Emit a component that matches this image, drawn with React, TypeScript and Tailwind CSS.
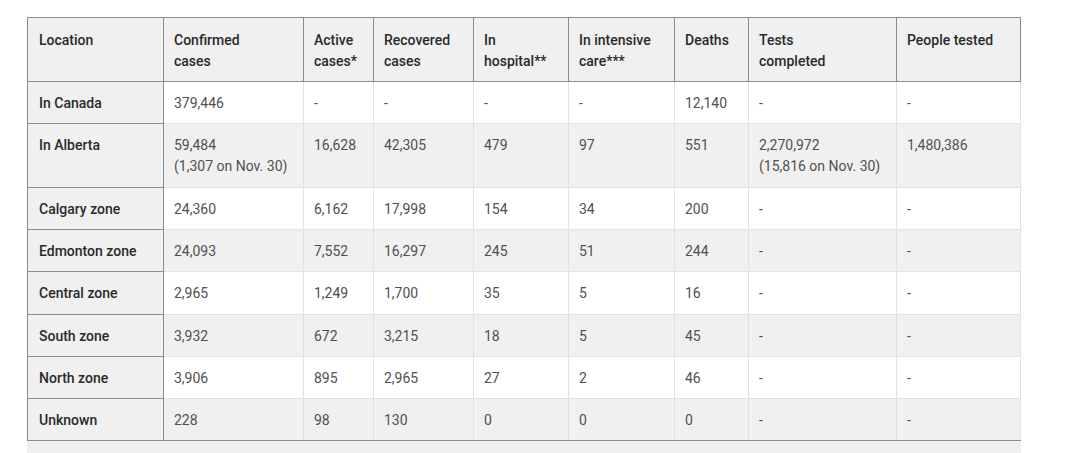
type Row = { loc: string; cells: (string | [string, string])[]; tall?: boolean };

const HEADERS = [
  ['Location'],
  ['Confirmed', 'cases'],
  ['Active', 'cases*'],
  ['Recovered', 'cases'],
  ['In', 'hospital**'],
  ['In intensive', 'care***'],
  ['Deaths'],
  ['Tests', 'completed'],
  ['People tested'],
];

const WIDTHS = [136, 140, 70, 100, 95, 106, 74, 148, 124];

const ROWS: Row[] = [
  { loc: 'In Canada', cells: ['379,446', '-', '-', '-', '-', '12,140', '-', '-'] },
  {
    loc: 'In Alberta',
    cells: [['59,484', '(1,307 on Nov. 30)'], '16,628', '42,305', '479', '97', '551', ['2,270,972', '(15,816 on Nov. 30)'], '1,480,386'],
    tall: true,
  },
  { loc: 'Calgary zone', cells: ['24,360', '6,162', '17,998', '154', '34', '200', '-', '-'] },
  { loc: 'Edmonton zone', cells: ['24,093', '7,552', '16,297', '245', '51', '244', '-', '-'] },
  { loc: 'Central zone', cells: ['2,965', '1,249', '1,700', '35', '5', '16', '-', '-'], tall: true },
  { loc: 'South zone', cells: ['3,932', '672', '3,215', '18', '5', '45', '-', '-'] },
  { loc: 'North zone', cells: ['3,906', '895', '2,965', '27', '2', '46', '-', '-'] },
  { loc: 'Unknown', cells: ['228', '98', '130', '0', '0', '0', '-', '-'] },
];

export default function App() {
  return (
    <div className="w-[1080px] h-[453px] bg-white pt-[17px] pl-[27px] overflow-hidden" style={{ fontFamily: 'Roboto, "Liberation Sans", sans-serif' }}>
      <div className="w-[994px]">
        <table className="table-fixed border-collapse w-full text-[14px] leading-[21px]">
          <colgroup>
            {WIDTHS.map((w, i) => <col key={i} style={{ width: w }} />)}
          </colgroup>
          <thead>
            <tr className="bg-[#f0f0f0]">
              {HEADERS.map((h, i) => (
                <th key={i} className={`border border-[#8c8c8c] text-left align-top font-medium text-[#2a2a2a] pr-[10px] pt-[12px] pb-[9px] ${i === 0 ? 'pl-[11px]' : 'pl-[10px]'}`}>
                  {h.map((l) => <div key={l}>{l}</div>)}
                </th>
              ))}
            </tr>
          </thead>
          <tbody>
            {ROWS.map((r, ri) => {
              const last = ri === ROWS.length - 1;
              const pad = r.tall ? 'pt-[11px] pb-[10px]' : 'pt-[11px] pb-[9px]';
              return (
                <tr key={r.loc} className={ri % 2 === 0 ? 'bg-white' : 'bg-[#f0f0f0]'}>
                  <td className={`bg-[#f0f0f0] border border-[#8c8c8c] align-top font-medium text-[#2a2a2a] pl-[11px] pr-[10px] ${pad}`}>{r.loc}</td>
                  {r.cells.map((c, ci) => (
                    <td
                      key={ci}
                      className={`border border-[#e2e2e2] align-top text-[#505050] px-[10px] ${pad} ${last ? 'border-b-[#8c8c8c]' : ''}`}
                    >
                      {Array.isArray(c) ? c.map((l) => <div key={l}>{l}</div>) : c}
                    </td>
                  ))}
                </tr>
              );
            })}
          </tbody>
        </table>
        <div className="h-[14px] bg-[#f0f0f0]" />
      </div>
    </div>
  );
}
